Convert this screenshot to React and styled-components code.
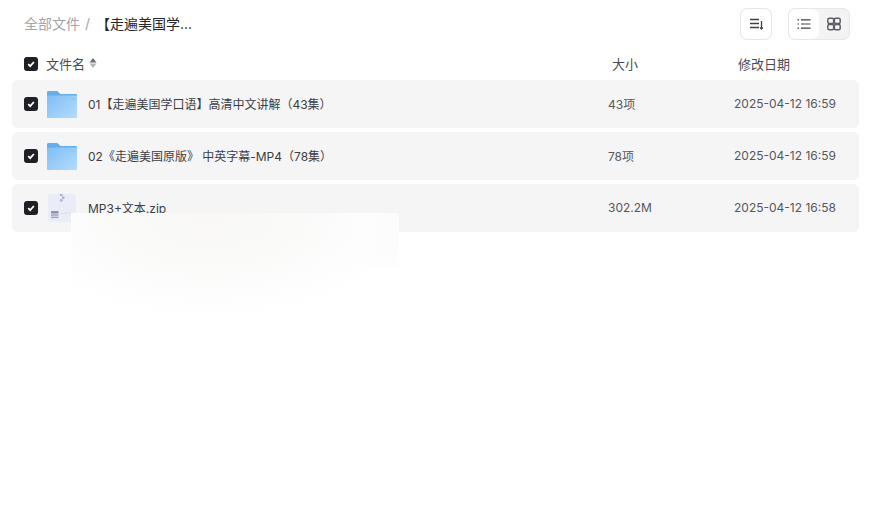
import React from "react";
import styled, { createGlobalStyle } from "styled-components";

const GlobalStyle = createGlobalStyle`
  html, body { margin: 0; padding: 0; background: #fff; }
  body { font-family: Inter, "Noto Sans CJK SC", sans-serif; }
`;

const Page = styled.div`
  position: relative;
  width: 874px;
  height: 514px;
  overflow: hidden;
  background: #fff;
  padding: 8px 15px 0 12px;
  box-sizing: border-box;
`;

const Toolbar = styled.div`
  display: flex;
  align-items: center;
  justify-content: space-between;
  height: 32px;
  padding: 0 9px 0 12px;
`;

const Crumbs = styled.div`
  display: flex;
  align-items: center;
  font-size: 14px;
  line-height: 20px;
  margin-top: -1px;
`;

const CrumbRoot = styled.span`
  color: #a3a3a8;
`;

const CrumbSep = styled.span`
  color: #a3a3a8;
  margin: 0 5px;
`;

const CrumbCurrent = styled.span`
  color: #25262b;
  margin-left: 1px;
`;

const Tools = styled.div`
  display: flex;
  gap: 16px;
`;

const ToolButton = styled.div`
  width: 32px;
  height: 32px;
  box-sizing: border-box;
  border: 1px solid #e6e6e8;
  border-radius: 7px;
  display: flex;
  align-items: center;
  justify-content: center;
`;

const Segment = styled.div`
  display: flex;
  width: 62px;
  height: 32px;
  box-sizing: border-box;
  border: 1px solid #e6e6e8;
  border-radius: 7px;
  background: #f3f3f4;
  overflow: hidden;
`;

const SegmentItem = styled.div`
  flex: 1;
  display: flex;
  align-items: center;
  justify-content: center;
  background: ${(p) => (p.$active ? "#fff" : "transparent")};
  border-radius: 0 7px 7px 0;
`;

const HeaderRow = styled.div`
  display: flex;
  align-items: center;
  height: 40px;
  box-sizing: border-box;
  padding: 8px 0 0 12px;
  color: #4a4b52;
  font-size: 13px;
`;

const Rows = styled.div`
  display: flex;
  flex-direction: column;
  gap: 4px;
`;

const Row = styled.div`
  display: flex;
  align-items: center;
  height: 48px;
  padding-left: 12px;
  background: #f5f5f5;
  border-radius: 6px;
  font-size: 12px;
  color: #3c3d44;
`;

const Check = styled.span`
  flex: none;
  width: 14px;
  height: 14px;
  border-radius: 3px;
  background: #1f2026;
  display: flex;
  align-items: center;
  justify-content: center;
`;

const NameHead = styled.span`
  display: flex;
  align-items: center;
  gap: 4px;
  width: 566px;
  margin-left: 8px;
  padding-bottom: 2px;
`;

const SizeHead = styled.span`
  width: 126px;
  padding-bottom: 2px;
`;

const DateHead = styled.span`
  padding-bottom: 2px;
`;

const FileIcon = styled.span`
  flex: none;
  display: flex;
  width: 30px;
  height: 30px;
  margin: 0 11px 0 9px;
`;

const Name = styled.span`
  width: 520px;
  white-space: nowrap;
  padding-bottom: 1px;
`;

const Size = styled.span`
  width: 126px;
  color: #56575d;
  padding-bottom: 1px;
`;

const DateText = styled.span`
  color: #56575d;
  padding-bottom: 1px;
`;

// soft white patch lying over the third row
const Fade = styled.div`
  position: absolute;
  left: 71px;
  top: 213px;
  width: 328px;
  height: 120px;
  pointer-events: none;
  background:
    radial-gradient(ellipse 62% 88% at 42% 0%, #f9f8f7 0%, #fafaf9 45%, #fdfdfd 78%, rgba(255, 255, 255, 0) 100%),
    linear-gradient(180deg, #fafafa 0%, #fcfcfc 35%, #ffffff 50%);
`;

const CheckMark = () => (
  <Check>
    <svg width="10" height="10" viewBox="0 0 10 10">
      <path d="M2.2 5.2 4.2 7.2 7.9 3" fill="none" stroke="#fff" strokeWidth="1.8" />
    </svg>
  </Check>
);

const SortCaret = () => (
  <svg width="8" height="12" viewBox="0 0 8 12">
    <path d="M4 1 7.5 5.4H.5Z" fill="#6c6d73" />
    <path d="M4 11 .5 6.6h7Z" fill="#b5b5b8" />
  </svg>
);

const SortIcon = () => (
  <svg width="16" height="16" viewBox="0 0 16 16" fill="none" stroke="#3f4046" strokeWidth="1.3">
    <path d="M2 3.500h9M2 7.500h9M2 11.500h9M13.500 5v7.500" />
    <path d="M12.200 11.500 13.500 13 14.800 11.500" />
  </svg>
);

const ListIcon = () => (
  <svg width="14" height="14" viewBox="0 0 14 14" fill="none" stroke="#3f4046" strokeWidth="1.2">
    <path d="M.5 2.800h1.600M.5 7h1.600M.5 11.200h1.600M4 2.800h9.500M4 7h9.500M4 11.200h9.500" />
  </svg>
);

const GridIcon = () => (
  <svg width="14" height="14" viewBox="0 0 14 14" fill="none" stroke="#5c5d63" strokeWidth="1.500">
    <rect x=".8" y="1.200" width="5.900" height="5.300" rx="1.500" />
    <rect x="7.300" y="1.200" width="5.900" height="5.300" rx="1.500" />
    <rect x=".8" y="7.500" width="5.900" height="5.300" rx="1.500" />
    <rect x="7.300" y="7.500" width="5.900" height="5.300" rx="1.500" />
  </svg>
);

const FolderIcon = ({ id }) => (
  <svg width="30" height="30" viewBox="0 0 30 30">
    <defs>
      <linearGradient id={id} x1="0" y1="0" x2="1" y2="1">
        <stop offset="0" stopColor="#7fbdf6" />
        <stop offset="1" stopColor="#b4dcfd" />
      </linearGradient>
    </defs>
    <path d="M0 3.500C0 2.700 .6 2 1.400 2h8.900l3 3H29c.6 0 1 .4 1 1v4H0Z" fill="#62aeee" />
    <path d="M0 6.500h29.600c.3 0 .4.200.4.400V29H1c-.6 0-1-.4-1-1Z" fill={`url(#${id})`} />
    <rect x="24" y="9" width="3.500" height="1.400" fill="#8dc3f2" />
  </svg>
);

const ZipIcon = () => (
  <svg width="30" height="30" viewBox="0 0 30 30">
    <path d="M1 4C1 2.200 2.200 1 4 1h21c2 0 4 1.800 4 4v24H3c-1.200 0-2-.8-2-2Z" fill="#eaedf8" />
    <path d="M13 1h2.500v2H13ZM15 3.500h2.500v2.200H15ZM13 6.200h2.500v2.300H13Z" fill="#a8aed0" />
    <rect x="4" y="18" width="7.500" height="2.600" fill="#8e93ad" />
    <rect x="4" y="21.300" width="7.500" height="1.500" fill="#a1a5bc" />
    <rect x="4" y="23.600" width="7.500" height="1.500" fill="#a1a5bc" />
    <rect x="13" y="19.500" width="11" height="1.500" fill="#e0e3f0" />
  </svg>
);

const files = [
  { name: "01【走遍美国学口语】高清中文讲解（43集）", size: "43项", date: "2025-04-12 16:59", type: "folder" },
  { name: "02《走遍美国原版》 中英字幕-MP4（78集）", size: "78项", date: "2025-04-12 16:59", type: "folder" },
  { name: "MP3+文本.zip", size: "302.2M", date: "2025-04-12 16:58", type: "zip" },
];

export default function App() {
  return (
    <Page>
      <GlobalStyle />
      <Toolbar>
        <Crumbs>
          <CrumbRoot>全部文件</CrumbRoot>
          <CrumbSep>/</CrumbSep>
          <CrumbCurrent>【走遍美国学...</CrumbCurrent>
        </Crumbs>
        <Tools>
          <ToolButton>
            <SortIcon />
          </ToolButton>
          <Segment>
            <SegmentItem $active>
              <ListIcon />
            </SegmentItem>
            <SegmentItem>
              <GridIcon />
            </SegmentItem>
          </Segment>
        </Tools>
      </Toolbar>
      <HeaderRow>
        <CheckMark />
        <NameHead>
          文件名
          <SortCaret />
        </NameHead>
        <SizeHead>大小</SizeHead>
        <DateHead>修改日期</DateHead>
      </HeaderRow>
      <Rows>
        {files.map((file, i) => (
          <Row key={file.name}>
            <CheckMark />
            <FileIcon>{file.type === "folder" ? <FolderIcon id={`folder-${i}`} /> : <ZipIcon />}</FileIcon>
            <Name>{file.name}</Name>
            <Size>{file.size}</Size>
            <DateText>{file.date}</DateText>
          </Row>
        ))}
      </Rows>
      <Fade />
    </Page>
  );
}
